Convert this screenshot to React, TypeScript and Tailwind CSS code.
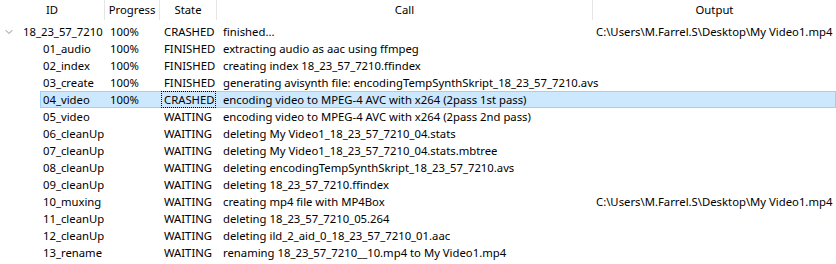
import { ChevronDown } from "lucide-react";

type Row = {
  id: string;
  progress: string;
  state: string;
  call: string;
  output?: string;
  parent?: boolean;
  selected?: boolean;
};

const rows: Row[] = [
  { id: "18_23_57_7210", progress: "100%", state: "CRASHED", call: "finished...", output: "C:\\Users\\M.Farrel.S\\Desktop\\My Video1.mp4", parent: true },
  { id: "01_audio", progress: "100%", state: "FINISHED", call: "extracting audio as aac using ffmpeg" },
  { id: "02_index", progress: "100%", state: "FINISHED", call: "creating index 18_23_57_7210.ffindex" },
  { id: "03_create", progress: "100%", state: "FINISHED", call: "generating avisynth file: encodingTempSynthSkript_18_23_57_7210.avs" },
  { id: "04_video", progress: "100%", state: "CRASHED", call: "encoding video to MPEG-4 AVC with x264 (2pass 1st pass)", selected: true },
  { id: "05_video", progress: "", state: "WAITING", call: "encoding video to MPEG-4 AVC with x264 (2pass 2nd pass)" },
  { id: "06_cleanUp", progress: "", state: "WAITING", call: "deleting My Video1_18_23_57_7210_04.stats" },
  { id: "07_cleanUp", progress: "", state: "WAITING", call: "deleting My Video1_18_23_57_7210_04.stats.mbtree" },
  { id: "08_cleanUp", progress: "", state: "WAITING", call: "deleting encodingTempSynthSkript_18_23_57_7210.avs" },
  { id: "09_cleanUp", progress: "", state: "WAITING", call: "deleting 18_23_57_7210.ffindex" },
  { id: "10_muxing", progress: "", state: "WAITING", call: "creating mp4 file with MP4Box", output: "C:\\Users\\M.Farrel.S\\Desktop\\My Video1.mp4" },
  { id: "11_cleanUp", progress: "", state: "WAITING", call: "deleting 18_23_57_7210_05.264" },
  { id: "12_cleanUp", progress: "", state: "WAITING", call: "deleting ild_2_aid_0_18_23_57_7210_01.aac" },
  { id: "13_rename", progress: "", state: "WAITING", call: "renaming 18_23_57_7210__10.mp4 to My Video1.mp4" },
];

const headers = [
  { label: "ID", w: "w-[105px]" },
  { label: "Progress", w: "w-[55px]" },
  { label: "State", w: "w-[57px]" },
  { label: "Call", w: "w-[376px]" },
  { label: "Output", w: "flex-1" },
];

export default function App() {
  return (
    <div
      className="w-[836px] h-[264px] bg-white overflow-hidden text-[11.3px] text-black leading-none"
      style={{ fontFamily: '"Segoe UI", "Noto Sans", sans-serif' }}
    >
      <div className="flex h-[23px]">
        {headers.map((h) => (
          <div
            key={h.label}
            className={`${h.w} h-[20px] flex items-center justify-center border-r border-[#e5e5e5] last:border-r-0`}
          >
            {h.label}
          </div>
        ))}
      </div>
      {rows.map((r) => (
        <div key={r.id} className="flex h-[17px] items-center">
          <div
            className={`${r.parent ? "w-[20px]" : "w-[40px]"} flex items-center pl-[3px] shrink-0`}
          >
            {r.parent && <ChevronDown size={12} strokeWidth={1.6} className="text-[#6e6e6e]" />}
          </div>
          <div
            className={`flex flex-1 h-full items-center min-w-0 ${
              r.selected ? "bg-[#cce8ff] border border-[#99d1ff]" : "border border-transparent"
            }`}
          >
            <div className={`${r.parent ? "w-[85px]" : "w-[65px]"} pl-[2px] whitespace-nowrap shrink-0`}>
              {r.id}
            </div>
            <div className="w-[55px] pl-[4px] shrink-0">{r.progress}</div>
            <div className="w-[57px] h-full flex items-center shrink-0">
              <span
                className={`pl-[3px] pr-[1px] h-[17px] flex items-center ${
                  r.selected ? "outline outline-1 outline-dotted outline-black -outline-offset-1" : ""
                }`}
              >
                {r.state}
              </span>
            </div>
            <div className="w-[376px] pl-[5px] whitespace-nowrap shrink-0">{r.call}</div>
            <div className="flex-1 pl-[2px] whitespace-nowrap">{r.output ?? ""}</div>
          </div>
        </div>
      ))}
    </div>
  );
}
